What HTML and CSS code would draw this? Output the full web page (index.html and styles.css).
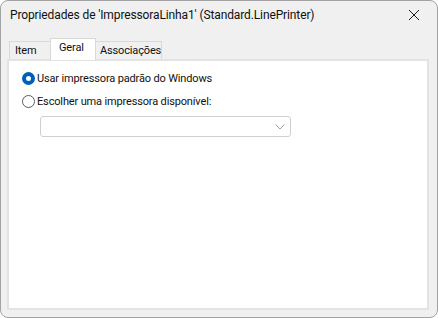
FILE: index.html
```html
<!DOCTYPE html>
<html lang="pt">
<head>
  <meta charset="UTF-8">
  <title>Propriedades</title>
  <link rel="stylesheet" href="styles.css">
</head>
<body>
  <div class="window">
    <div class="titlebar">
      <span class="title">Propriedades de 'ImpressoraLinha1' (Standard.LinePrinter)</span>
      <span class="close">
        <svg width="12" height="12" viewBox="0 0 12 12"><path d="M1 1 L11 11 M11 1 L1 11" stroke="#1a1a1a" stroke-width="1" fill="none"/></svg>
      </span>
    </div>

    <div class="tabs">
      <div class="tab tab-item">Item</div>
      <div class="tab tab-geral active">Geral</div>
      <div class="tab tab-assoc">Associações</div>
    </div>

    <div class="panel">
      <label class="option">
        <span class="radio checked"></span>
        Usar impressora padrão do Windows
      </label>
      <label class="option">
        <span class="radio"></span>
        Escolher uma impressora disponível:
      </label>
      <div class="select">
        <svg width="10" height="6" viewBox="0 0 10 6"><path d="M0.5 0.5 L5 5 L9.5 0.5" stroke="#a0a0a0" stroke-width="1" fill="none"/></svg>
      </div>
    </div>
  </div>
</body>
</html>
```

FILE: styles.css
```css
body {
  margin: 0;
  font-family: Roboto, "Noto Sans", sans-serif;
  font-size: 11px;
  letter-spacing: -0.15px;
  color: #111;
}

.window {
  width: 438px;
  height: 318px;
  box-sizing: border-box;
  border: 1px solid #a3a3a3;
  border-radius: 8px;
  background: #f0f0f0;
  display: flex;
  flex-direction: column;
  overflow: hidden;
}

.titlebar {
  height: 28px;
  display: flex;
  align-items: center;
  justify-content: space-between;
  padding: 0 17px 0 9px;
  flex-shrink: 0;
}

.title {
  font-size: 12px;
  letter-spacing: -0.12px;
}

.close {
  display: flex;
}

.tabs {
  display: flex;
  align-items: flex-end;
  height: 21px;
  margin-top: 9px;
  padding-left: 8px;
  position: relative;
  z-index: 1;
}

.tab {
  height: 18px;
  box-sizing: border-box;
  border: 1px solid #d9d9d9;
  border-bottom: none;
  padding: 1px 0 0 5px;
  background: #f0f0f0;
  line-height: 16px;
}

.tab + .tab {
  margin-left: -1px;
}

.tab-item {
  width: 42px;
}

.tab-geral {
  width: 46px;
}

.tab-assoc {
  width: 67px;
  padding-left: 4px;
}

.tab.active {
  height: 22px;
  margin-bottom: -1px;
  background: #fff;
  padding: 0 0 0 8px;
  line-height: 18px;
}

.panel {
  flex: 1;
  margin: 0 8px 7px 6px;
  border: 2px solid #e3e3e3;
  background: #fff;
  padding: 9px 13px;
}

.option {
  display: flex;
  align-items: center;
  gap: 2px;
  height: 17px;
  margin-bottom: 6px;
}

.radio {
  width: 13px;
  height: 13px;
  box-sizing: border-box;
  border: 1px solid #5c5c5c;
  border-radius: 50%;
  background: #fff;
  flex-shrink: 0;
}

.radio.checked {
  border: 4px solid #005fb8;
  background: #fff;
}

.select {
  width: 251px;
  height: 21px;
  box-sizing: border-box;
  margin: 0 0 0 18px;
  border: 1px solid #cfcfcf;
  border-radius: 3px;
  background: #fff;
  display: flex;
  align-items: center;
  justify-content: flex-end;
  padding-right: 5px;
}
```
